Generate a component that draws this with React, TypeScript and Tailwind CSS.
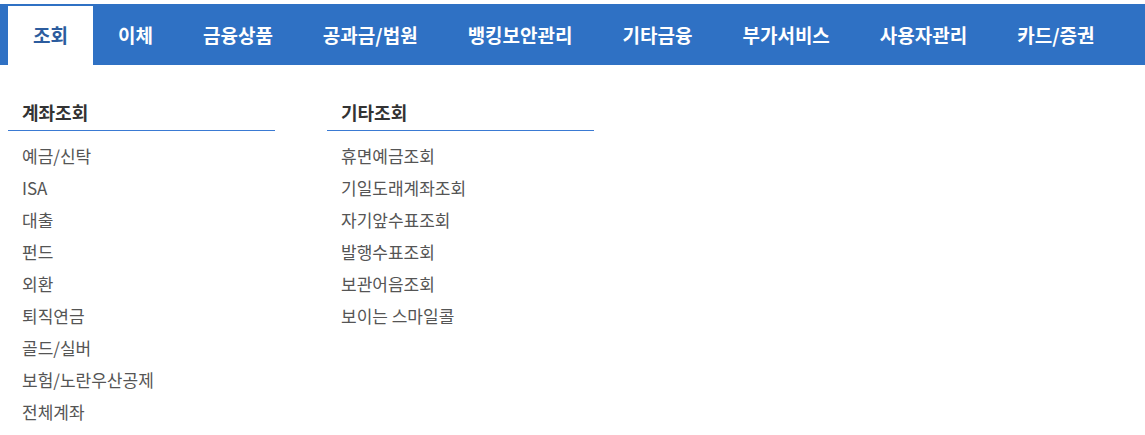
const tabs = ['조회', '이체', '금융상품', '공과금/법원', '뱅킹보안관리', '기타금융', '부가서비스', '사용자관리', '카드/증권']

const groups = [
  {
    title: '계좌조회',
    items: ['예금/신탁', 'ISA', '대출', '펀드', '외환', '퇴직연금', '골드/실버', '보험/노란우산공제', '전체계좌'],
  },
  {
    title: '기타조회',
    items: ['휴면예금조회', '기일도래계좌조회', '자기앞수표조회', '발행수표조회', '보관어음조회', '보이는 스마일콜'],
  },
]

export default function App() {
  return (
    <div className="min-h-[435px] bg-white pt-[4px] font-['Noto_Sans_CJK_KR','Noto_Sans',sans-serif]">
      <nav className="flex h-[61px] bg-[#2f71c4] pl-2 pt-[2px]">
        {tabs.map((tab, i) => (
          <a
            key={tab}
            href="#"
            className={
              i === 0
                ? 'flex h-full items-center bg-white px-[25px] text-[19px] font-bold text-[#2c5c9e]'
                : 'flex h-full items-center px-[25px] text-[19px] font-bold text-white'
            }
          >
            {tab}
          </a>
        ))}
      </nav>

      <div className="flex gap-[52px] pl-2 pt-[35px]">
        {groups.map((group) => (
          <div key={group.title} className="w-[267px]">
            <h3 className="border-b border-[#3a7ad3] pb-[6px] pl-[14px] text-[18px] font-bold leading-[24px] text-[#333]">
              {group.title}
            </h3>
            <ul className="pt-[9px]">
              {group.items.map((item) => (
                <li key={item} className="pl-[14px] text-[17px] leading-[32px] text-[#555]">
                  {item}
                </li>
              ))}
            </ul>
          </div>
        ))}
      </div>
    </div>
  )
}
